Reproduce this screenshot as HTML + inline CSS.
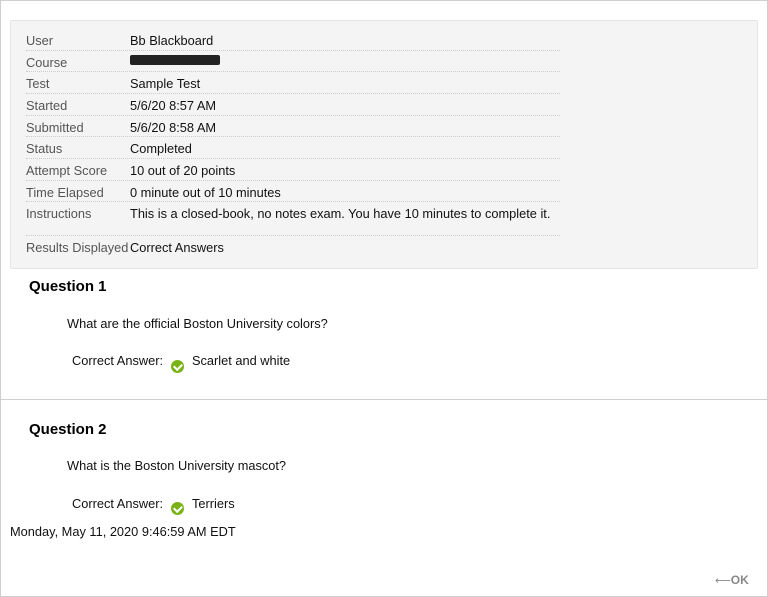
<!DOCTYPE html>
<html><head><style>
*{margin:0;padding:0;box-sizing:border-box}
body{width:768px;height:597px;position:relative;background:#fff;font-family:"Liberation Sans",sans-serif;font-size:12.8px;color:#111;overflow:hidden}
.frame{position:absolute;left:0;top:0;width:768px;height:597px;border:1px solid #cfcfcf}
.box{position:absolute;left:10px;top:20px;width:748px;height:249px;background:#f4f4f4;border:1px solid #e4e4e4;border-radius:2px}
.r{position:absolute;left:15px;width:534px;border-bottom:1px dotted #ccc;height:21.7px}
.r span{position:absolute;top:4px}
.l{left:0;color:#555}.v{left:104px;color:#111}
.a{position:absolute;white-space:nowrap}
.h{font-weight:bold;font-size:15px;color:#000}
.chk{position:absolute;width:13px;height:13px;border-radius:50%;background:#7ab317}
.chk:after{content:"";position:absolute;left:3.5px;top:2px;width:3.5px;height:6px;border:solid #fff;border-width:0 2px 2px 0;transform:rotate(45deg)}
</style></head><body>
<div class="frame"></div>
<div class="box">
<div class="r" style="top:8px"><span class="l">User</span><span class="v">Bb Blackboard</span></div>
<div class="r" style="top:29.7px"><span class="l">Course</span><span class="v" style="top:4px;background:#222;width:90px;height:10px;display:block;border-radius:2px"></span></div>
<div class="r" style="top:51.4px"><span class="l">Test</span><span class="v">Sample Test</span></div>
<div class="r" style="top:73px"><span class="l">Started</span><span class="v">5/6/20 8:57 AM</span></div>
<div class="r" style="top:94.7px"><span class="l">Submitted</span><span class="v">5/6/20 8:58 AM</span></div>
<div class="r" style="top:116.4px"><span class="l">Status</span><span class="v">Completed</span></div>
<div class="r" style="top:138px"><span class="l">Attempt Score</span><span class="v">10 out of 20 points</span></div>
<div class="r" style="top:159.7px"><span class="l">Time Elapsed</span><span class="v">0 minute out of 10 minutes</span></div>
<div class="r" style="top:181.4px;height:34px"><span class="l">Instructions</span><span class="v">This is a closed-book, no notes exam. You have 10 minutes to complete it.</span></div>
<div class="r" style="top:215.4px;border:none"><span class="l">Results Displayed</span><span class="v">Correct Answers</span></div>
</div>
<div class="a h" style="left:29px;top:278px">Question 1</div>
<div class="a" style="left:67px;top:316px">What are the official Boston University colors?</div>
<div class="a" style="left:72px;top:353px">Correct Answer:</div>
<div class="chk" style="left:171px;top:360px"></div>
<div class="a" style="left:192px;top:353px">Scarlet and white</div>
<div style="position:absolute;left:0;top:399px;width:768px;height:1px;background:#cfcfcf"></div>
<div class="a h" style="left:29px;top:421px">Question 2</div>
<div class="a" style="left:67px;top:458px">What is the Boston University mascot?</div>
<div class="a" style="left:72px;top:496px">Correct Answer:</div>
<div class="chk" style="left:171px;top:502px"></div>
<div class="a" style="left:192px;top:496px">Terriers</div>
<div class="a" style="left:10px;top:524px">Monday, May 11, 2020 9:46:59 AM EDT</div>
<div class="a" style="left:715px;top:573px;color:#888;font-weight:bold;font-size:12px"><span style="font-family:'DejaVu Sans',sans-serif;font-weight:normal;font-size:11px">&#x27F5;</span>OK</div>
</body></html>
